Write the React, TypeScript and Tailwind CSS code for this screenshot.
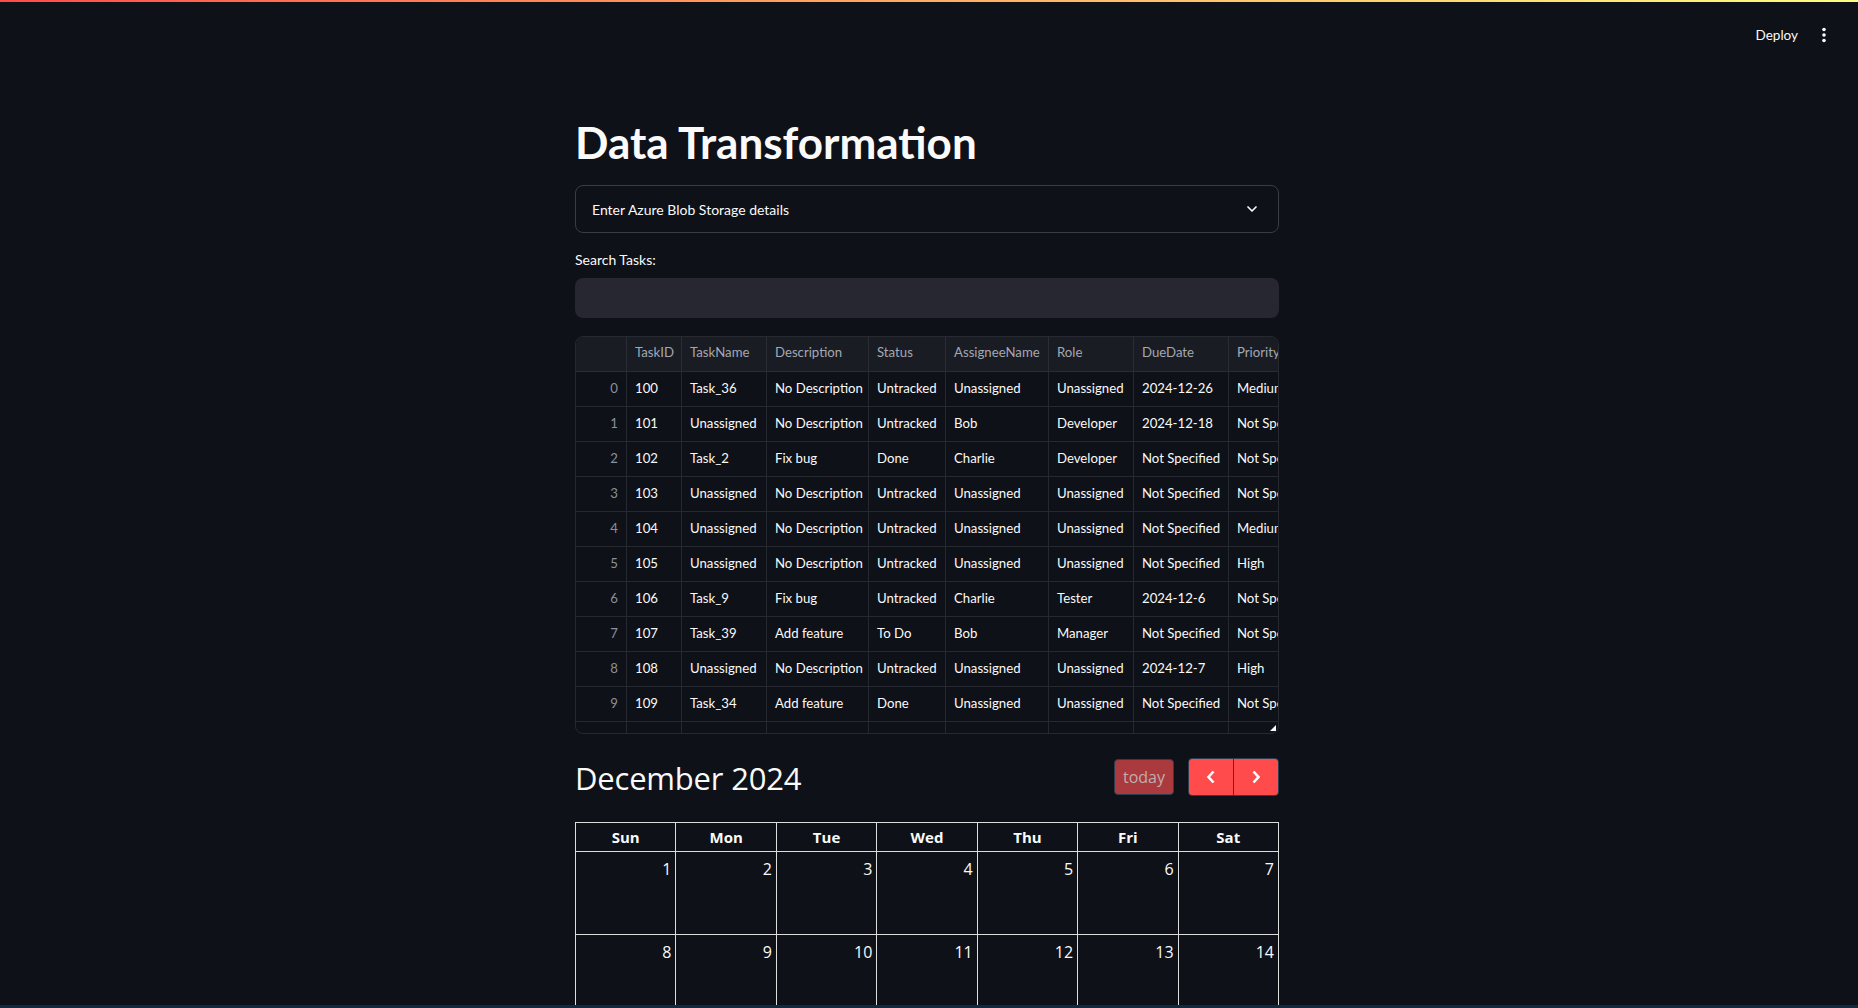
import { ChevronDown } from "lucide-react";

const columns = [
  { name: "TaskID", w: "w-[55px]" },
  { name: "TaskName", w: "w-[85px]" },
  { name: "Description", w: "w-[102px]" },
  { name: "Status", w: "w-[77px]" },
  { name: "AssigneeName", w: "w-[103px]" },
  { name: "Role", w: "w-[85px]" },
  { name: "DueDate", w: "w-[95px]" },
  { name: "Priority", w: "w-[110px]" },
];

const rows = [
  ["100", "Task_36", "No Description", "Untracked", "Unassigned", "Unassigned", "2024-12-26", "Medium"],
  ["101", "Unassigned", "No Description", "Untracked", "Bob", "Developer", "2024-12-18", "Not Specified"],
  ["102", "Task_2", "Fix bug", "Done", "Charlie", "Developer", "Not Specified", "Not Specified"],
  ["103", "Unassigned", "No Description", "Untracked", "Unassigned", "Unassigned", "Not Specified", "Not Specified"],
  ["104", "Unassigned", "No Description", "Untracked", "Unassigned", "Unassigned", "Not Specified", "Medium"],
  ["105", "Unassigned", "No Description", "Untracked", "Unassigned", "Unassigned", "Not Specified", "High"],
  ["106", "Task_9", "Fix bug", "Untracked", "Charlie", "Tester", "2024-12-6", "Not Specified"],
  ["107", "Task_39", "Add feature", "To Do", "Bob", "Manager", "Not Specified", "Not Specified"],
  ["108", "Unassigned", "No Description", "Untracked", "Unassigned", "Unassigned", "2024-12-7", "High"],
  ["109", "Task_34", "Add feature", "Done", "Unassigned", "Unassigned", "Not Specified", "Not Specified"],
];

const weekdays = ["Sun", "Mon", "Tue", "Wed", "Thu", "Fri", "Sat"];

// December 2024 starts on a Sunday; six weeks like FullCalendar's month view
const weeks: { day: number; other: boolean }[][] = [];
for (let w = 0; w < 6; w++) {
  const week = [];
  for (let d = 0; d < 7; d++) {
    const n = w * 7 + d + 1;
    week.push(n > 31 ? { day: n - 31, other: true } : { day: n, other: false });
  }
  weeks.push(week);
}

export default function App() {
  return (
    <div className="min-h-screen bg-[#0e1117] font-['Lato','Noto_Sans',sans-serif] text-[#fafafa]">
      <Header />
      <main className="flex justify-center pr-1 pt-[56px] pb-10">
        <div className="flex w-[704px] flex-col">
          <h1 className="mb-4 h-[53px] text-[44px] font-bold leading-[53px]">
            Data Transformation
          </h1>

          <div className="flex h-[48px] items-center justify-between rounded-lg border border-[#3a3c43] px-4">
            <span className="text-[14px]">Enter Azure Blob Storage details</span>
            <ChevronDown size={16} strokeWidth={2.5} className="mr-[2px] text-[#fafafa]" />
          </div>

          <label className="mt-4 h-[21px] text-[14px] leading-[21px]">Search Tasks:</label>
          <div className="mt-[8px] h-[40px] rounded-lg bg-[#262730]" />

          <DataTable />

          <Calendar />
        </div>
      </main>
      <div className="fixed bottom-0 left-0 h-[3px] w-full bg-[#0f2b40]" />
    </div>
  );
}

function Header() {
  return (
    <header className="relative flex h-[60px] items-center justify-end pr-[32px]">
      <div className="absolute left-0 top-0 h-[2px] w-full bg-gradient-to-r from-[#ff4b4b] to-[#fffd80]" />
      <button className="mt-[10px] text-[13.5px] text-[#fafafa]">Deploy</button>
      <svg width="4" height="16" viewBox="0 0 4 16" className="ml-[24px] mt-[10px]">
        <circle cx="2" cy="2.5" r="1.8" fill="#fafafa" />
        <circle cx="2" cy="8" r="1.8" fill="#fafafa" />
        <circle cx="2" cy="13.5" r="1.8" fill="#fafafa" />
      </svg>
    </header>
  );
}

function DataTable() {
  return (
    <div className="relative mt-[18px] h-[398px] overflow-hidden rounded-lg border border-[#262930] text-[13.2px]">
      <div className="flex w-max">
        <div className="flex w-[51px] shrink-0 flex-col">
          <div className="h-[35px] border-b border-r border-[#2a2d35] bg-[#1a1c23]" />
          {rows.map((_, i) => (
            <div
              key={i}
              className="flex h-[35px] items-center justify-end border-b border-r border-[#262930] px-2 text-[#8c909a]"
            >
              {i}
            </div>
          ))}
          <div className="h-[35px] border-r border-[#262930]" />
        </div>
        {columns.map((col, c) => (
          <div key={col.name} className={`flex shrink-0 flex-col ${col.w}`}>
            <div className="flex h-[35px] items-center overflow-hidden whitespace-nowrap border-b border-r border-[#2a2d35] bg-[#1a1c23] px-2 pb-[2px] text-[#a3a8b4]">
              {col.name}
            </div>
            {rows.map((r, i) => (
              <div
                key={i}
                className="flex h-[35px] items-center overflow-hidden whitespace-nowrap border-b border-r border-[#262930] px-2"
              >
                {r[c]}
              </div>
            ))}
            <div className="h-[35px] border-r border-[#262930]" />
          </div>
        ))}
      </div>
      <div className="absolute bottom-[2px] right-[2px] h-0 w-0 border-b-[6px] border-l-[6px] border-b-[#fafafa] border-l-transparent" />
    </div>
  );
}

function Calendar() {
  return (
    <div className="mt-[25px] font-['Open_Sans','Noto_Sans',sans-serif]">
      <div className="mb-[25px] flex h-[38px] items-center justify-between">
        <h2 className="text-[31px] leading-none tracking-[-0.2px]">December 2024</h2>
        <div className="-mt-[3px] flex items-center">
          <button className="h-[36px] w-[60px] rounded border border-[#2c3e50] bg-[#ab3a3e] text-[16px] text-[#bfaeae]">
            today
          </button>
          <div className="ml-[14px] flex h-[38px] overflow-hidden rounded border border-[#2c3e50]">
            <button className="flex w-[45px] items-center justify-center border-r border-[#2c3e50] bg-[#ff4b4b]">
              <svg width="10" height="16" viewBox="0 0 10 16">
                <path d="M7.5 2.5 L2.5 8 L7.5 13.5" fill="none" stroke="#fff" strokeWidth="2.6" />
              </svg>
            </button>
            <button className="flex w-[44px] items-center justify-center bg-[#ff4b4b]">
              <svg width="10" height="16" viewBox="0 0 10 16">
                <path d="M2.5 2.5 L7.5 8 L2.5 13.5" fill="none" stroke="#fff" strokeWidth="2.6" />
              </svg>
            </button>
          </div>
        </div>
      </div>

      <div className="border-l border-t border-[#dddddd]">
        <div className="grid grid-cols-7">
          {weekdays.map((d) => (
            <div
              key={d}
              className="flex h-[29px] items-center justify-center border-b border-r border-[#dddddd] text-[15px] font-bold"
            >
              {d}
            </div>
          ))}
        </div>
        {weeks.map((week, w) => (
          <div key={w} className="grid grid-cols-7">
            {week.map((cell, d) => (
              <div
                key={d}
                className="h-[83px] border-b border-r border-[#dddddd] px-1 pt-[5px] text-right text-[16px] leading-[24px]"
              >
                <span className={cell.other ? "opacity-30" : ""}>{cell.day}</span>
              </div>
            ))}
          </div>
        ))}
      </div>
    </div>
  );
}
